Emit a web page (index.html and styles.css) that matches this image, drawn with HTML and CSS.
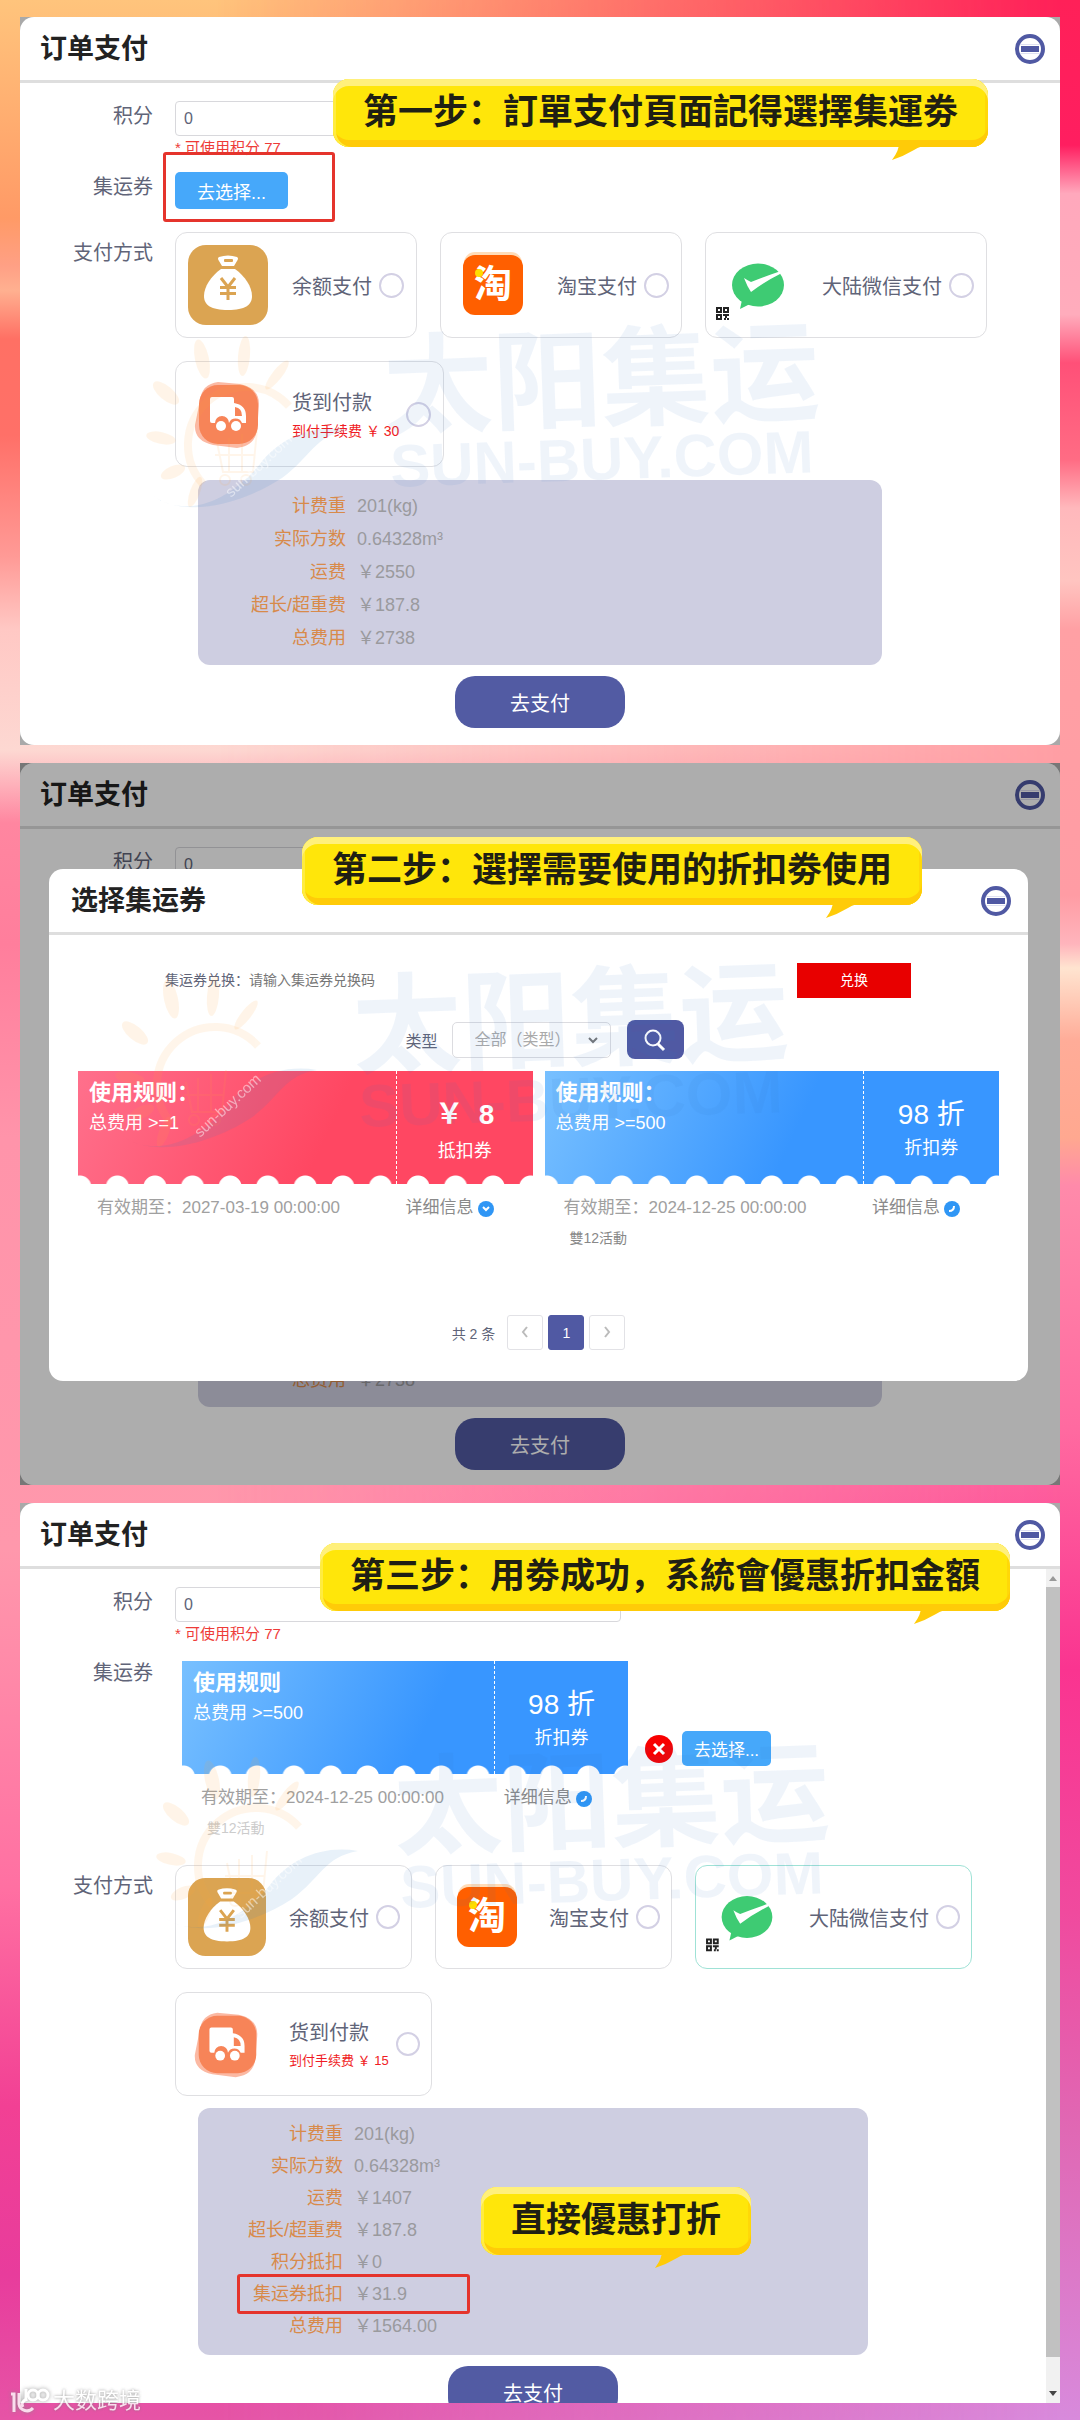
FILE: index.html
```html
<!DOCTYPE html>
<html lang="zh-CN">
<head>
<meta charset="utf-8">
<meta name="viewport" content="width=device-width, initial-scale=1">
<title>订单支付</title>
<link rel="stylesheet" href="styles.css">
</head>
<body>
<svg class="defs" width="0" height="0" aria-hidden="true">
  <symbol id="i-close" viewBox="0 0 32 32">
    <circle cx="16" cy="16" r="13" fill="none" stroke="#5059a3" stroke-width="4"/>
    <path d="M7 16h18" stroke="#5059a3" stroke-width="6"/>
    <path d="M6 11.500h20M6 20.500h20" stroke="#dfe1f2" stroke-width="1"/>
  </symbol>
  <symbol id="i-money" viewBox="0 0 80 80">
    <rect width="80" height="80" rx="18" fill="#dba452"/>
    <path d="M31 12q9-3 18 0q2 1 0 4l-3 5h-12l-3-5q-2-3 0-4z" fill="#fff"/>
    <rect x="36" y="14" width="9" height="3" rx="1" fill="#dba452"/>
    <path d="M33 24h14c10 7 17 18 17 27c0 9-7 14-24 14s-24-5-24-14c0-9 7-20 17-27z" fill="#fff"/>
    <path d="M33 33l7 9l7-9M40 42v13M32 42.500h16M32 48.500h16" fill="none" stroke="#dba452" stroke-width="3"/>
  </symbol>
  <symbol id="i-truck" viewBox="0 0 80 80">
    <path d="M12 26q2-16 18-18l22 2q20 4 19 22l-2 24q-2 16-20 18l-24-3q-19-4-18-20z" fill="#fbb9a3"/>
    <rect x="11" y="11" width="59" height="59" rx="19" fill="#f78458"/>
    <path d="M24 23h20q2 0 2 2v4q12 2 12 13v7h-4a7 7 0 0 0-13 0a7 7 0 0 0-14 0h-3q-2 0-2-2v-22q0-2 2-2z" fill="#fff"/>
    <path d="M47 33q7 1 7 9h-7z" fill="#f78458"/>
    <circle cx="33" cy="52" r="5" fill="#fff"/><circle cx="48" cy="52" r="5" fill="#fff"/>
  </symbol>
  <symbol id="i-wechat" viewBox="0 0 80 80" overflow="visible">
    <ellipse cx="40" cy="40" rx="26" ry="21.500" fill="#3ecb73"/>
    <path d="M24 55l-2 9l10-5z" fill="#3ecb73"/>
    <path d="M26 33q3 2 7 4q15-6 30-11l-1 3q-16 8-29 18q-4-6-7-14z" fill="#fff"/>
    <g fill="none" stroke="#222" stroke-width="2">
      <path d="M-1 63h4v4h-4zM6 63h4v4h-4zM-1 70h4v4h-4z"/>
      <path d="M5 70h3v3M6 74h2M10 69v2M9 74h2"/>
    </g>
  </symbol>
  <symbol id="i-tail" viewBox="0 0 56 20">
    <path d="M12 0h44q-22 5-30 10q-10 6-22 10q7-9 8-20z" fill="#ffcb08"/>
  </symbol>
</svg>

<main class="guide">

  <section class="panel">
    <div class="sheet">
      <header class="bar">
        <h2>订单支付</h2>
        <button class="close" aria-label="关闭"><svg><use href="#i-close"/></svg></button>
      </header>
      <form class="form">
        <div class="row">
          <label for="points-1">积分</label>
          <div>
            <input class="text" id="points-1" type="text" value="0">
            <p class="hint">* 可使用积分 77</p>
          </div>
        </div>
        <div class="row">
          <span class="name">集运券</span>
          <div class="boxed"><button type="button" class="pick">去选择...</button></div>
        </div>
        <div class="row methods-row">
          <span class="name lower">支付方式</span>
          <div class="methods">
            <label class="card"><svg class="icon"><use href="#i-money"/></svg><span>余额支付</span><input type="radio" name="pay-1"></label>
            <label class="card"><span class="icon"><b class="tao">淘</b></span><span>淘宝支付</span><input type="radio" name="pay-1"></label>
            <label class="card"><svg class="icon"><use href="#i-wechat"/></svg><span>大陆微信支付</span><input type="radio" name="pay-1"></label>
            <label class="card"><svg class="icon"><use href="#i-truck"/></svg><span>货到付款<small>到付手续费 ￥ 30</small></span><input type="radio" name="pay-1"></label>
          </div>
        </div>
        <dl class="summary">
          <div><dt>计费重</dt><dd>201(kg)</dd></div>
          <div><dt>实际方数</dt><dd>0.64328m³</dd></div>
          <div><dt>运费</dt><dd>￥2550</dd></div>
          <div><dt>超长/超重费</dt><dd>￥187.8</dd></div>
          <div><dt>总费用</dt><dd>￥2738</dd></div>
        </dl>
        <button type="button" class="pay">去支付</button>
      </form>
    </div>
    <svg class="mark mark-1" viewBox="0 0 700 200" aria-hidden="true">
      <g id="mark-art">
        <g fill="#ffa63c" opacity=".11">
          <ellipse cx="57" cy="37" rx="7" ry="20" transform="rotate(-12 57 37)"/>
          <ellipse cx="99" cy="34" rx="6" ry="20" transform="rotate(5 99 34)"/>
          <ellipse cx="132" cy="53" rx="5" ry="18" transform="rotate(38 132 53)"/>
          <ellipse cx="21" cy="71" rx="7" ry="16" transform="rotate(-50 21 71)"/>
          <ellipse cx="16" cy="116" rx="6" ry="15" transform="rotate(-78 16 116)"/>
          <ellipse cx="28" cy="150" rx="6" ry="13" transform="rotate(66 28 150)"/>
          <ellipse cx="50" cy="170" rx="5" ry="16" transform="rotate(20 50 170)"/>
        </g>
        <g fill="none" stroke="#ffa63c" opacity=".1">
          <path d="M58 162a52 52 0 0 1 86-78" stroke-width="8"/>
          <path d="M72 120l6 30h30l4-42M70 133h40M84 116v34M97 112v38" stroke-width="2"/>
          <circle cx="80" cy="158" r="5" stroke-width="2"/><circle cx="101" cy="158" r="5" stroke-width="2"/>
        </g>
        <path d="M6 172c30 24 74 12 109-30c20-26 52-40 88-34c-34 6-36 26-66 48c-40 26-100 42-131 16z" fill="#2f7fc4" opacity=".11"/>
        <text x="86" y="176" transform="rotate(-43 86 176)" font-size="15" fill="#fff" opacity=".5">sun-buy.com</text>
        <g fill="#2f74c8" font-weight="700">
          <text x="240" y="104" transform="rotate(-2 240 104)" font-size="109" opacity=".07">太阳集运</text>
          <text x="246" y="165" transform="rotate(-2 246 165)" font-size="60" opacity=".07">SUN-BUY.COM</text>
        </g>
      </g>
    </svg>
    <p class="callout callout-1">第一步：訂單支付頁面記得選擇集運劵<svg><use href="#i-tail"/></svg></p>
  </section>

  <section class="panel stacked">
    <div class="sheet back">
      <header class="bar">
        <h2>订单支付</h2>
        <button class="close" aria-label="关闭"><svg><use href="#i-close"/></svg></button>
      </header>
      <form class="form">
        <div class="row">
          <label for="points-2">积分</label>
          <div><input class="text" id="points-2" type="text" value="0"></div>
        </div>
        <dl class="summary">
          <div><dt>总费用</dt><dd>￥2738</dd></div>
        </dl>
        <button type="button" class="pay">去支付</button>
      </form>
    </div>
    <div class="veil">
      <div class="modal" role="dialog" aria-label="选择集运券">
        <header class="bar">
          <h2>选择集运券</h2>
          <button class="close" aria-label="关闭"><svg><use href="#i-close"/></svg></button>
        </header>
        <div class="exchange">
          <label for="code">集运券兑换：</label>
          <input id="code" type="text" placeholder="请输入集运券兑换码">
          <button>兑换</button>
        </div>
        <div class="filter">
          <label for="kind">类型</label>
          <div class="select">
            <select id="kind"><option>全部（类型）</option></select>
            <svg viewBox="0 0 12 12"><path d="M2 4l4 4l4-4" fill="none" stroke="#777" stroke-width="2"/></svg>
          </div>
          <button aria-label="搜索"><svg viewBox="0 0 24 24"><circle cx="10" cy="10" r="7.500" fill="none" stroke="#fff" stroke-width="2"/><path d="M15 16l6 6" stroke="#fff" stroke-width="3"/></svg></button>
        </div>
        <div class="coupons">
          <article class="coupon">
            <div class="ticket red">
              <div class="rules"><h3>使用规则：</h3><p>总费用 &gt;=1</p></div>
              <div class="worth"><b>￥&nbsp; 8</b><p>抵扣券</p></div>
            </div>
            <div class="meta"><span>有效期至：2027-03-19 00:00:00</span><a href="#detail">详细信息<svg viewBox="0 0 16 16"><circle cx="8" cy="8" r="8" fill="#2f96f5"/><path d="M5 6l3 3l3-3" fill="none" stroke="#fff" stroke-width="2"/></svg></a></div>
          </article>
          <article class="coupon">
            <div class="ticket">
              <div class="rules"><h3>使用规则：</h3><p>总费用 &gt;=500</p></div>
              <div class="worth"><span>98 折</span><p>折扣券</p></div>
            </div>
            <div class="meta"><span>有效期至：2024-12-25 00:00:00</span><a href="#detail">详细信息<svg viewBox="0 0 16 16"><circle cx="8" cy="8" r="8" fill="#2f96f5"/><path d="M10 5q0 5-5 5" fill="none" stroke="#fff" stroke-width="2"/></svg></a></div>
            <p class="note">雙12活動</p>
          </article>
        </div>
        <nav class="pager">
          <span>共 2 条</span>
          <button aria-label="上一页"><svg viewBox="0 0 12 12"><path d="M8 1l-4 5l4 5" fill="none" stroke="#bbb" stroke-width="2"/></svg></button>
          <button class="on">1</button>
          <button aria-label="下一页"><svg viewBox="0 0 12 12"><path d="M4 1l4 5l-4 5" fill="none" stroke="#bbb" stroke-width="2"/></svg></button>
        </nav>
      </div>
    </div>
    <svg class="mark mark-2" viewBox="0 0 700 200" aria-hidden="true"><use href="#mark-art"/></svg>
    <p class="callout callout-2">第二步：選擇需要使用的折扣劵使用<svg><use href="#i-tail"/></svg></p>
  </section>

  <section class="panel">
    <div class="sheet last">
      <header class="bar">
        <h2>订单支付</h2>
        <button class="close" aria-label="关闭"><svg><use href="#i-close"/></svg></button>
      </header>
      <div class="scroller">
        <form class="form compact">
          <div class="row">
            <label for="points-3">积分</label>
            <div>
              <input class="text" id="points-3" type="text" value="0">
              <p class="hint">* 可使用积分 77</p>
            </div>
          </div>
          <div class="row chosen-row">
            <span class="name">集运券</span>
            <div class="chosen">
              <article class="coupon">
                <div class="ticket">
                  <div class="rules"><h3>使用规则</h3><p>总费用 &gt;=500</p></div>
                  <div class="worth"><span>98 折</span><p>折扣券</p></div>
                </div>
                <div class="meta"><span>有效期至：2024-12-25 00:00:00</span><a href="#detail">详细信息<svg viewBox="0 0 16 16"><circle cx="8" cy="8" r="8" fill="#2f96f5"/><path d="M10 5q0 5-5 5" fill="none" stroke="#fff" stroke-width="2"/></svg></a></div>
                <p class="note">雙12活動</p>
              </article>
              <div class="actions">
                <button type="button" class="remove" aria-label="移除"><svg viewBox="0 0 28 28"><circle cx="14" cy="14" r="14" fill="#f80000"/><path d="M9 9l10 10M19 9l-10 10" stroke="#fff" stroke-width="3"/></svg></button>
                <button type="button" class="pick">去选择...</button>
              </div>
            </div>
          </div>
          <div class="row methods-row">
            <span class="name lower">支付方式</span>
            <div class="methods">
              <label class="card"><svg class="icon"><use href="#i-money"/></svg><span>余额支付</span><input type="radio" name="pay-3"></label>
              <label class="card"><span class="icon"><b class="tao">淘</b></span><span>淘宝支付</span><input type="radio" name="pay-3"></label>
              <label class="card active"><svg class="icon"><use href="#i-wechat"/></svg><span>大陆微信支付</span><input type="radio" name="pay-3"></label>
              <label class="card"><svg class="icon"><use href="#i-truck"/></svg><span>货到付款<small>到付手续费 ￥ 15</small></span><input type="radio" name="pay-3"></label>
            </div>
          </div>
          <dl class="summary">
            <div><dt>计费重</dt><dd>201(kg)</dd></div>
            <div><dt>实际方数</dt><dd>0.64328m³</dd></div>
            <div><dt>运费</dt><dd>￥1407</dd></div>
            <div><dt>超长/超重费</dt><dd>￥187.8</dd></div>
            <div><dt>积分抵扣</dt><dd>￥0</dd></div>
            <div class="marked"><dt>集运券抵扣</dt><dd>￥31.9</dd></div>
            <div><dt>总费用</dt><dd>￥1564.00</dd></div>
          </dl>
          <button type="button" class="pay">去支付</button>
        </form>
        <div class="scrollbar" aria-hidden="true">
          <svg viewBox="0 0 14 18"><path d="M3 12l4-5l4 5z" fill="#999"/></svg>
          <i></i>
          <svg class="down" viewBox="0 0 14 18"><path d="M3 6l4 5l4-5z" fill="#444"/></svg>
        </div>
      </div>
    </div>
    <svg class="mark mark-3" viewBox="0 0 700 200" aria-hidden="true"><use href="#mark-art"/></svg>
    <p class="callout callout-3">第三步：用劵成功，系統會優惠折扣金額<svg><use href="#i-tail"/></svg></p>
    <p class="callout callout-4">直接優惠打折<svg><use href="#i-tail"/></svg></p>
  </section>
</main>

<footer class="source">
  <svg viewBox="0 0 40 28"><g fill="none" stroke="#fff" stroke-width="3"><path d="M1 7h3v18M9 6v11a8 8 0 0 0 14 4"/><path d="M17 12q-7 3-4 8"/><path d="M16 2v12"/><circle cx="23" cy="8" r="5"/><circle cx="33" cy="8" r="5"/></g></svg>
  <span>大数跨境</span>
</footer>
</body>
</html>
```
FILE: styles.css
```css
*, *::before, *::after { box-sizing: border-box; }

body {
  position: relative;
  min-height: 100vh;
  margin: 0;
  font-family: "Liberation Sans", "Noto Sans CJK SC", sans-serif;
  font-size: 20px;
  color: #606478;
  background: linear-gradient(#ffc47c 0, #ff9a66 9%, #ffa085 11%, #ffb090 12%, #ff7064 14%, #ff7068 18%, #ff9a96 23%, #ffc8c4 26%, #fdd8d2 31%, #ff86a0 34%, #ff7e9c 39%, #ff94aa 47%, #ff98ac 64%, #ff70a2 78%, #f24094 87%, #e83c9c 94%, #e654a6 100%);
}

body::before {
  content: "";
  position: absolute;
  inset: 0;
  background: linear-gradient(#ff2058 0, #ff1e60 6%, #ffa8bc 8%, #ffacbc 13%, #ff5078 15%, #ff6c84 19%, #ffb8bc 21%, #ffc4c0 24%, #ffa0a4 26%, #ff9ca4 37%, #ffb4bc 39%, #ffe4d0 40%, #ffac98 43%, #ffa890 47%, #ff8aaa 49%, #ff6aa0 59%, #fa3490 69%, #f04a9e 79%, #e068b4 88%, #d88adc 100%);
  mask-image: linear-gradient(to right, transparent 20%, #000 98%);
}

h2, h3, p, dl, dd { margin: 0; }
button, input, select { font: inherit; color: inherit; border: 0; padding: 0; background: none; }
.defs { position: absolute; }

.guide {
  position: relative;
  display: flex;
  flex-direction: column;
  gap: 18px;
  padding: 17px 20px 16px;
}

.panel { position: relative; background: #a9a9a9; }
.sheet { background: #fff; border-radius: 14px; }

.bar {
  display: flex;
  align-items: center;
  justify-content: space-between;
  height: 66px;
  padding: 0 14px 0 20px;
  border-bottom: 3px solid #dedede;
}
.bar h2 { font-size: 27px; line-height: 40px; color: #222; }
.close, .close svg { display: block; width: 32px; height: 32px; }

.form { padding: 18px 0 17px; }
.row { display: grid; grid-template-columns: 133px 1fr; column-gap: 22px; }
.row > label, .name { text-align: right; line-height: 30px; }
.lower { padding-top: 6px; }
.text {
  display: block;
  width: 446px;
  height: 35px;
  padding: 0 8px;
  border: 1px solid #d8d8dc;
  border-radius: 4px;
  font-size: 16px;
}
.hint { padding-top: 2px; height: 36px; font-size: 15px; line-height: 20px; color: #ee3b38; }
.pick {
  width: 113px;
  height: 37px;
  border-radius: 5px;
  background: #46a8fa;
  color: #fff;
  font-size: 18px;
}
.boxed { position: relative; height: 60px; }
.boxed::after, .marked::after {
  content: "";
  position: absolute;
  border: 3px solid #e5342c;
  border-radius: 3px;
}
.boxed::after { left: -12px; top: -20px; width: 172px; height: 70px; }

.methods { display: flex; flex-wrap: wrap; gap: 23px; padding-right: 50px; }
.card {
  display: flex;
  align-items: center;
  height: 106px;
  padding: 0 12px;
  border: 1px solid #dfdfe2;
  border-radius: 12px;
  white-space: nowrap;
}
.card.active { border-color: #9fe2d6; }
.card > span:not(.icon) { margin: 0 7px 0 24px; }
.card small { display: block; margin: 5px 0 0; font-size: 14px; line-height: 20px; color: #f01c24; }
.icon { display: flex; align-items: center; justify-content: center; width: 80px; height: 80px; overflow: visible; }
.tao {
  position: relative;
  width: 60px;
  height: 60px;
  border-radius: 12px;
  background: #ff5f00;
  box-shadow: 0 -4px 0 -1px #ffdcb8;
  color: #fff;
  font-size: 38px;
  line-height: 58px;
  text-align: center;
}
.tao::after {
  content: "";
  position: absolute;
  left: 12px;
  top: 14px;
  width: 8px;
  height: 8px;
  border-radius: 50%;
  background: #ffdc00;
}
.card input {
  appearance: none;
  width: 25px;
  height: 25px;
  margin: 0;
  border: 2px solid #d3d0e4;
  border-radius: 50%;
}

.summary { margin: 13px 178px 11px; padding: 10px 0; border-radius: 12px; background: #cecee1; font-size: 18px; }
.summary div { position: relative; display: grid; grid-template-columns: 148px 1fr; column-gap: 11px; line-height: 33px; }
.summary dt { text-align: right; color: #d88a4a; }
.summary dd { color: #9a9a9e; }
.marked::after { left: 39px; top: -4px; width: 233px; height: 40px; }
.pay {
  display: block;
  width: 170px;
  height: 52px;
  margin: 0 auto;
  border-radius: 20px;
  background: #525ba3;
  color: #fff;
}

/* dialog on top of the order sheet: both layers share one grid cell */
.stacked { display: grid; background: #777; }
.stacked > .sheet, .veil { grid-area: 1 / 1; }
.back { display: flex; flex-direction: column; }
.back .form { flex: 1; display: flex; flex-direction: column; padding-bottom: 15px; }
.back .summary { margin-top: auto; }
.veil { z-index: 1; padding: 106px 32px 104px 29px; background: rgba(0, 0, 0, .32); border-radius: 14px; }
.modal { padding-bottom: 31px; border-radius: 14px; background: #fff; }
.modal .bar { padding-left: 22px; padding-right: 16px; }
.exchange { display: flex; padding: 28px 117px 22px 116px; font-size: 14px; line-height: 35px; }
.exchange input { flex: 1; min-width: 0; }
.exchange input::placeholder { color: #777; }
.exchange button { width: 114px; background: #e80000; color: #fff; }
.filter { display: flex; align-items: center; justify-content: center; padding-left: 12px; font-size: 16px; }
.select { position: relative; margin: 0 16px 0 14px; }
.select select { appearance: none; display: block; width: 159px; height: 36px; padding-left: 22px; border: 1px solid #dcdce0; border-radius: 5px; color: #aaa; }
.select svg { position: absolute; right: 12px; top: 12px; width: 12px; height: 12px; }
.filter button { display: flex; align-items: center; justify-content: center; width: 57px; height: 39px; border-radius: 8px; background: #5059a3; }
.filter button svg { width: 24px; height: 24px; }

.coupons { display: grid; grid-template-columns: 1fr 1fr; gap: 12px; min-height: 256px; padding: 12px 29px 0; }
.ticket {
  position: relative;
  display: grid;
  grid-template-columns: 7fr 3fr;
  height: 113px;
  background: linear-gradient(115deg, #78c0ff, #3896ff 55%);
  color: #fff;
}
.ticket.red { background: linear-gradient(115deg, #ff708c, #ff4762 55%); }
.ticket::after {
  content: "";
  position: absolute;
  inset: auto 0 0;
  height: 9px;
  background: radial-gradient(circle at 50% 12px, #fff 11px, transparent 12px) -17px 0 / calc((100% - 4px) / 12) 100%;
}
.rules { padding: 7px 11px; font-size: 18px; line-height: 26px; }
.rules h3 { margin-bottom: 2px; font-size: 22px; line-height: 30px; }
.worth { padding-top: 25px; border-left: 1px dashed #fff; text-align: center; font-size: 18px; line-height: 28px; }
.worth > :first-child { display: block; font-size: 28px; line-height: 38px; }
.red .worth p { padding-top: 3px; }
.meta { display: flex; padding: 11px 0 0 19px; font-size: 17px; line-height: 26px; color: #a0a0a0; white-space: nowrap; }
.meta span { flex: 1; }
.meta a { display: flex; align-items: center; width: 31%; padding-left: 8px; gap: 4px; color: #8a8a8a; text-decoration: none; }
.meta svg { width: 16px; height: 16px; margin-top: 2px; }
.note { padding: 7px 25px 0; font-size: 14px; line-height: 20px; color: #888; }

.pager { display: flex; justify-content: center; align-items: center; gap: 5px; font-size: 14px; }
.pager span { margin-right: 7px; }
.pager button { width: 36px; height: 35px; border: 1px solid #e2e2e6; border-radius: 3px; }
.pager .on { border-color: #5059a3; background: #5059a3; color: #fff; }
.pager svg { width: 12px; height: 12px; }

.last { overflow: hidden; border-radius: 14px 14px 0 0; }
.scroller { display: flex; }
.compact { flex: 1; min-width: 0; padding-bottom: 0; }
.chosen-row { min-height: 207px; }
.chosen { display: flex; align-items: flex-start; padding: 3px 0 0 7px; }
.chosen .coupon { width: 446px; }
.chosen .note { color: #ccc; }
.actions { display: flex; align-items: center; gap: 9px; padding: 70px 0 0 17px; }
.actions .pick { width: 89px; height: 35px; font-size: 17px; }
.remove, .remove svg { display: block; width: 28px; height: 28px; }
.compact .card { height: 104px; padding: 0 11px 0 12px; }
.compact .card > span:not(.icon) { margin-left: 23px; }
.compact .icon { width: 78px; height: 78px; }
.compact .card input { width: 24px; height: 24px; }
.compact .card small { font-size: 13px; }
.compact .summary { margin-top: 12px; padding: 10px 0 13px; }
.compact .summary div { grid-template-columns: 145px 1fr; line-height: 32px; }
.compact .pay { margin-bottom: -15px; }
.scrollbar { display: flex; flex-direction: column; width: 14px; background: #f1f1f1; }
.scrollbar i { flex: 1; background: #c1c1c1; }
.scrollbar svg { width: 14px; height: 18px; }
.scrollbar .down { margin-top: 28px; }

.mark { position: absolute; z-index: 2; width: 700px; height: 200px; pointer-events: none; }
.mark-1 { left: 125px; top: 305px; }
.mark-2 { left: 94px; top: 199px; }
.mark-3 { left: 135px; top: 240px; }

.callout {
  position: absolute;
  z-index: 3;
  height: 68px;
  padding: 0 30px;
  border-radius: 16px;
  background: #ffe60a;
  box-shadow: inset 0 7px 0 #fff07c, inset 3px 0 0 #ffec40, inset 0 -7px 0 #ffcb08, inset -3px 0 0 #ffd808;
  color: #1f1f14;
  font-size: 35px;
  font-weight: 700;
  line-height: 66px;
  white-space: nowrap;
}
.callout svg { position: absolute; right: 44px; top: 61px; width: 56px; height: 20px; }
.callout-1 { left: 313px; top: 62px; }
.callout-2 { left: 282px; top: 74px; }
.callout-3 { left: 300px; top: 40px; }
.callout-4 { left: 461px; top: 684px; }

.source {
  position: absolute;
  left: 10px;
  bottom: 4px;
  display: flex;
  align-items: center;
  gap: 3px;
  color: #fff;
  font-size: 22px;
  line-height: 30px;
  opacity: .8;
  text-shadow: 0 0 3px #777;
}
.source svg { width: 40px; height: 28px; filter: drop-shadow(0 0 2px #888); }
```
